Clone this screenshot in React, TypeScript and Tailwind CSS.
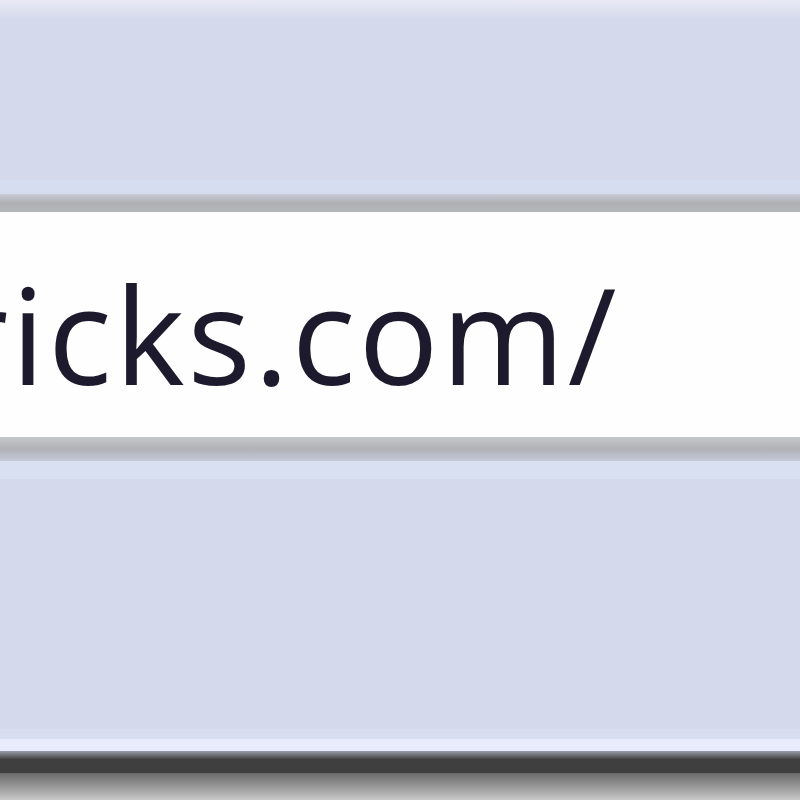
export default function App() {
  return (
    <div className="flex h-[800px] w-[800px] flex-col overflow-hidden bg-[#d4d9ec]">
      {/* toolbar top */}
      <div className="h-[20px] bg-gradient-to-b from-[#e8ebf5] to-[#d4d9ec]" />
      <div className="h-[160px] bg-[#d4d9ec]" />
      <div className="h-[14px] bg-[#d7ddf0]" />
      <div className="h-[18px] bg-gradient-to-b from-[#c8cbd6] via-[#b0b1b5] to-[#b4b5b8]" />

      {/* address field */}
      <div className="flex h-[225px] items-center overflow-hidden bg-[#fefefe]">
        <span className="ml-[-46px] mt-[18px] whitespace-nowrap font-['Open_Sans',sans-serif] text-[133px] font-medium leading-none tracking-[3px] text-[#1c1a2c]">
          ricks.com/
        </span>
      </div>

      <div className="h-[24px] bg-gradient-to-b from-[#c6c7cb] via-[#b0b1b6] to-[#c4c9d8]" />
      <div className="h-[18px] bg-[#d9e0f2]" />
      <div className="h-[250px] bg-[#d4d9ec]" />
      <div className="h-[10px] bg-[#d8ddf0]" />
      <div className="h-[12px] bg-[#e8ecfc]" />
      <div className="h-[8px] bg-gradient-to-b from-[#9a9cab] to-[#474747]" />
      <div className="h-[14px] bg-[#3f3f3f]" />
      <div className="h-[27px] bg-gradient-to-b from-[#6a6a6a] to-[#c8c8c8]" />
      <div className="flex-1 bg-[#c8c8c8]" />
    </div>
  );
}
